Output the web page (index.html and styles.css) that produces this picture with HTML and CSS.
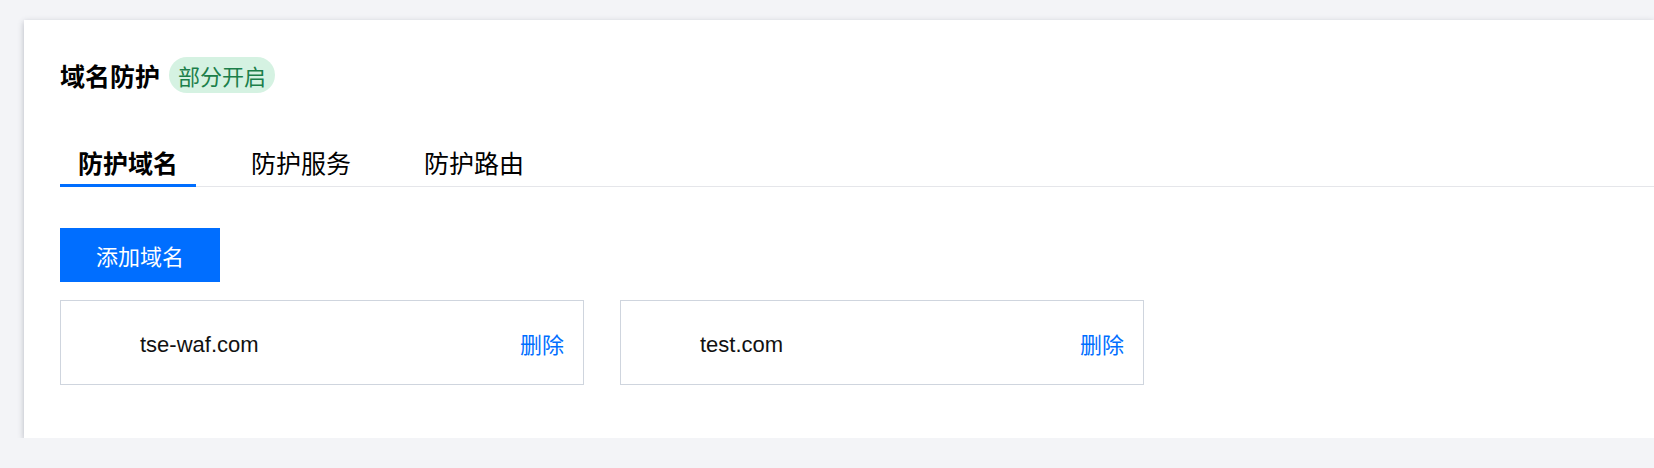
FILE: index.html
```html
<!DOCTYPE html>
<html lang="zh-CN">
<head>
<meta charset="utf-8">
<title>域名防护</title>
<link rel="stylesheet" href="styles.css">
</head>
<body>
<div class="panel">
  <div class="header">
    <h2 class="title">域名防护</h2>
    <span class="tag">部分开启</span>
  </div>
  <div class="tabs">
    <div class="tab active">防护域名</div>
    <div class="tab">防护服务</div>
    <div class="tab">防护路由</div>
  </div>
  <button class="btn-primary" type="button">添加域名</button>
  <div class="domain-list">
    <div class="domain-card">
      <span class="domain-name">tse-waf.com</span>
      <a class="link" href="#">删除</a>
    </div>
    <div class="domain-card">
      <span class="domain-name">test.com</span>
      <a class="link" href="#">删除</a>
    </div>
  </div>
</div>
</body>
</html>
```

FILE: styles.css
```css
html, body {
  margin: 0;
  padding: 0;
  overflow: hidden;
}
body {
  background: #f3f4f7;
  font-family: "Noto Sans CJK SC", "Liberation Sans", sans-serif;
  color: #000;
}
.panel {
  margin: 20px 0 0 24px;
  background: #fff;
  box-shadow: 0 2px 6px rgba(54, 58, 80, 0.32);
  padding: 37px 0 53px 36px;
  box-sizing: border-box;
}
.header {
  display: flex;
  align-items: center;
  height: 36px;
}
.title {
  margin: 0;
  font-size: 25px;
  font-weight: 700;
  line-height: 36px;
  color: #000;
}
.tag {
  margin-left: 9px;
  height: 36px;
  line-height: 36px;
  padding: 0 9px;
  border-radius: 18px;
  background: #d5f2e2;
  color: #1c7f4a;
  font-size: 22px;
}
.tabs {
  display: flex;
  gap: 37px;
  margin-top: 51px;
  border-bottom: 1px solid #e5e6ea;
}
.tab {
  padding: 0 18px 4px 18px;
  font-size: 25px;
  line-height: 36px;
  border-bottom: 3px solid transparent;
  margin-bottom: -1px;
  color: #000;
}
.tab.active {
  font-weight: 700;
  border-bottom-color: #006eff;
}
.btn-primary {
  display: block;
  margin-top: 41px;
  width: 160px;
  height: 54px;
  border: 0;
  border-radius: 0;
  background: #006eff;
  color: #fff;
  font-family: "Noto Sans CJK SC", sans-serif;
  font-size: 22px;
  padding: 0;
}
.domain-list {
  display: flex;
  gap: 36px;
  margin-top: 18px;
}
.domain-card {
  width: 524px;
  height: 85px;
  box-sizing: border-box;
  border: 1px solid #cfd5de;
  display: flex;
  align-items: center;
  justify-content: space-between;
  padding: 0 19px 0 79px;
}
.domain-name {
  font-family: "Liberation Sans", "Noto Sans CJK SC", sans-serif;
  font-size: 22px;
  color: #111;
  margin-top: 4px;
}
.link {
  font-size: 22px;
  color: #006eff;
  text-decoration: none;
}
```
